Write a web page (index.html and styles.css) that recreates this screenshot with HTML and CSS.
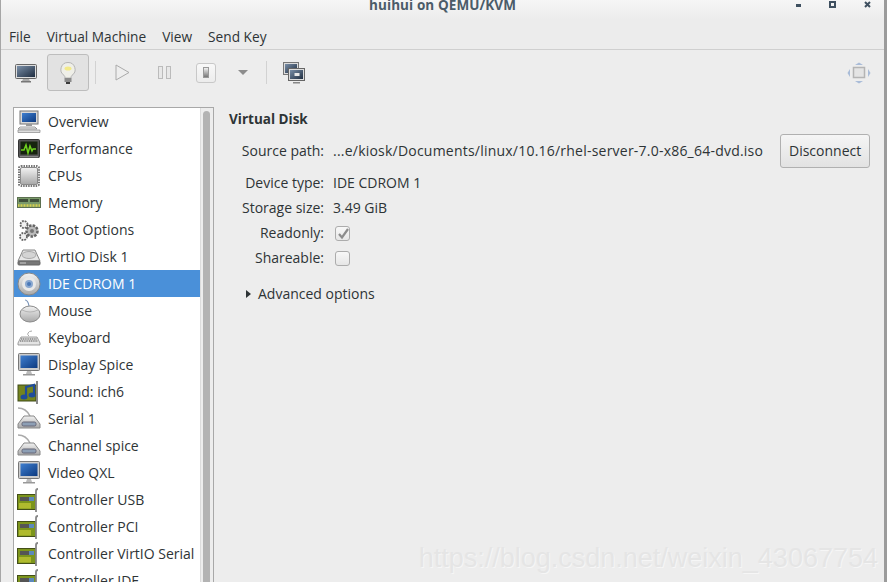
FILE: index.html
```html
<!doctype html>
<html>
  <head>
    <meta http-equiv="Content-Type" content="text/html; charset=utf-8">
    <title>huihui on QEMU/KVM</title>
    <link rel="stylesheet" href="styles.css">
  </head>
  <body>

    <svg class="defs" width="0" height="0">
      <defs>
        <linearGradient id="screen" x1="0" y1="0" x2="1" y2="1">
          <stop offset="0" stop-color="#7a8fa8"/><stop offset="1" stop-color="#1f2d40"/>
        </linearGradient>
        <linearGradient id="blue" x1="0" y1="0" x2="1" y2="1">
          <stop offset="0" stop-color="#3f7fd0"/><stop offset="1" stop-color="#0d3a80"/>
        </linearGradient>
        <linearGradient id="metal" x1="0" y1="0" x2="0" y2="1">
          <stop offset="0" stop-color="#f2f2f2"/><stop offset="1" stop-color="#a8a8a8"/>
        </linearGradient>
        <symbol id="i-overview" viewBox="0 0 24 24">
          <rect x="3" y="1" width="18" height="13" fill="#d8d8d8" stroke="#777"/>
          <rect x="5" y="3" width="14" height="9" fill="url(#blue)"/>
          <rect x="9" y="14" width="6" height="2" fill="#999"/>
          <path d="M3 17h15l2 2H1z" fill="#eee" stroke="#777" stroke-width=".7"/>
          <path d="M1 20h22v2.500H1z" fill="#ddd" stroke="#888" stroke-width=".7"/>
        </symbol>
        <symbol id="i-perf" viewBox="0 0 24 24">
          <rect x="1.500" y="2.500" width="21" height="18" rx="1" fill="#555" stroke="#333"/>
          <rect x="3.500" y="4.500" width="17" height="13" fill="#16240f"/>
          <path d="M4 13h3l2-5 2 8 2-7 2 5 1-2h3" fill="none" stroke="#6fd21e" stroke-width="1.500"/>
          <rect x="3" y="19" width="18" height="1.500" fill="#888"/>
        </symbol>
        <symbol id="i-cpu" viewBox="0 0 24 24">
          <rect x="2" y="2" width="20" height="20" rx="2" fill="none" stroke="#777" stroke-width="2" stroke-dasharray="1.500 1"/>
          <rect x="3.500" y="3.500" width="17" height="17" rx="1.500" fill="url(#metal)" stroke="#8a8a8a"/>
        </symbol>
        <symbol id="i-mem" viewBox="0 0 24 24">
          <rect x="0.500" y="6.500" width="23" height="10" fill="#7a9a6a" stroke="#5c7050"/>
          <rect x="2" y="8" width="9" height="3" fill="#3f4f3a"/>
          <rect x="13" y="8" width="9" height="3" fill="#3f4f3a"/>
          <path d="M1 14.500h22" stroke="#d6cf50" stroke-width="2.500" stroke-dasharray="1 .5"/>
        </symbol>
        <symbol id="i-boot" viewBox="0 0 24 24">
          <circle cx="15" cy="13" r="5.500" fill="#bbb" stroke="#666" stroke-width="2.500" stroke-dasharray="2.500 1.200"/>
          <circle cx="15" cy="13" r="2" fill="#777"/>
          <circle cx="7" cy="6.500" r="3.500" fill="#f2f2f2" stroke="#666" stroke-width="1.800" stroke-dasharray="1.800 1"/>
          <circle cx="6.500" cy="18.500" r="3.500" fill="#f2f2f2" stroke="#666" stroke-width="1.800" stroke-dasharray="1.800 1"/>
        </symbol>
        <symbol id="i-disk" viewBox="0 0 24 24">
          <path d="M6 5h12l5 11H1z" fill="#e6e6e6" stroke="#888"/>
          <ellipse cx="12" cy="10" rx="7" ry="3.500" fill="#d4d4d4" stroke="#aaa"/>
          <rect x="1" y="16" width="22" height="4" rx="1" fill="#777" stroke="#666"/>
          <rect x="3" y="17.500" width="6" height="1" fill="#ccc"/>
        </symbol>
        <symbol id="i-cd" viewBox="0 0 24 24">
          <circle cx="12" cy="12" r="11" fill="url(#metal)" stroke="#888"/>
          <circle cx="12" cy="12" r="7" fill="#e8e8e8"/>
          <circle cx="12" cy="12" r="4" fill="#8aa8d0"/>
          <circle cx="12" cy="12" r="2" fill="#4a78b8"/>
        </symbol>
        <symbol id="i-mouse" viewBox="0 0 24 24">
          <path d="M8 1q3 0 4 6" fill="none" stroke="#7a94b8" stroke-width="1.200"/>
          <ellipse cx="13" cy="15" rx="10" ry="8" fill="url(#metal)" stroke="#8a8a8a"/>
          <path d="M5 11q8 4 16 0" fill="none" stroke="#aaa" stroke-width=".8"/>
        </symbol>
        <symbol id="i-kbd" viewBox="0 0 24 24">
          <path d="M12 10q-2-1-1-3t4-2" fill="none" stroke="#aaa"/>
          <path d="M4 11h16l3 6v2H1v-2z" fill="#e4e4e4" stroke="#888" stroke-width=".8"/>
          <path d="M4 13h16M3 15h18" stroke="#555" stroke-width="1.200" stroke-dasharray="1.200 .6"/>
        </symbol>
        <symbol id="i-display" viewBox="0 0 24 24">
          <rect x="1.500" y="0.500" width="21" height="17" rx="1" fill="#ccc" stroke="#777"/>
          <rect x="3.500" y="2.500" width="17" height="12.500" fill="url(#blue)"/>
          <path d="M10 18h4l1 3H9z" fill="#bbb"/>
          <rect x="6" y="21" width="12" height="1.500" fill="#999"/>
        </symbol>
        <symbol id="i-sound" viewBox="0 0 24 24">
          <rect x="1" y="5" width="18" height="16" fill="#75841f" stroke="#3f4a18"/>
          <path d="M20 1v23" stroke="#888" stroke-width="2"/>
          <path d="M9 17V7l8-2v10" fill="none" stroke="#1f4c9c" stroke-width="2.200"/>
          <ellipse cx="7" cy="17" rx="3.500" ry="2.500" fill="#1f4c9c"/>
          <ellipse cx="15" cy="15" rx="3.500" ry="2.500" fill="#1f4c9c"/>
        </symbol>
        <symbol id="i-serial" viewBox="0 0 24 24">
          <path d="M1 1q8 0 12 8" fill="none" stroke="#aaa" stroke-width="1.500"/>
          <path d="M7 9h10l6 8v4H1v-4z" fill="url(#metal)" stroke="#888"/>
          <rect x="5" y="15" width="14" height="4" rx="1.500" fill="#8d9fb5" stroke="#667"/>
        </symbol>
        <symbol id="i-ctrl" viewBox="0 0 24 24">
          <rect x="0.500" y="6.500" width="18" height="15" fill="#7c951c" stroke="#444f18"/>
          <rect x="3" y="9" width="9" height="4" fill="#555"/>
          <rect x="12" y="9" width="5" height="4" fill="#5c88bb"/>
          <path d="M3 15v5.500M5 15v5.500M7 15v5.500M9 15v5.500M11 15v5.500M13 15v5.500" stroke="#e4e040"/>
          <path d="M21 1q-2 0-2 2v21" fill="none" stroke="#888" stroke-width="1.800"/>
        </symbol>
      </defs>
    </svg>

    <div class="window">
      <div class="titlebar">
        <span class="title">huihui on QEMU/KVM</span>
        <div class="controls">
          <span class="ctl-min"></span>
          <span class="ctl-max"></span>
          <svg class="ctl-close" width="7" height="7" viewBox="0 0 7 7"><path d="M1 1l5 5M6 1l-5 5" stroke="#3f5060" stroke-width="2"/></svg>
        </div>
      </div>

      <div class="menubar">
        <span>File</span>
        <span>Virtual Machine</span>
        <span>View</span>
        <span>Send Key</span>
      </div>

      <div class="toolbar">
        <div class="tool tool-first">
          <svg width="24" height="24" viewBox="0 0 24 24">
            <rect x="1.500" y="3.500" width="21" height="14" rx="1" fill="#ddd" stroke="#666"/>
            <rect x="3" y="5" width="18" height="11" fill="url(#screen)"/>
            <path d="M9 18h6l1 2H8z" fill="#aaa"/>
            <rect x="7" y="20" width="10" height="1.500" fill="#777"/>
          </svg>
        </div>
        <div class="tool tool-on">
          <svg width="16" height="22" viewBox="0 0 16 22">
            <path d="M8 .5a7 7 0 0 0-4 12.800q1 1 1 2.700h6q0-1.700 1-2.700a7 7 0 0 0-4-12.800z" fill="#efefe8" stroke="#b4b4b4"/>
            <ellipse cx="8" cy="6.500" rx="3.500" ry="2" fill="#f3ea88"/>
            <rect x="4.500" y="16" width="7" height="4" fill="#8a8a8a"/>
            <rect x="6" y="20" width="4" height="2" fill="#3a3a3a"/>
          </svg>
        </div>
        <span class="sep sep-a"></span>
        <div class="tool tool-play">
          <svg width="15" height="17" viewBox="0 0 15 17"><path d="M1 1l13 7.500L1 16z" fill="#eee" stroke="#aaa"/></svg>
        </div>
        <div class="tool tool-pause">
          <svg width="13" height="13" viewBox="0 0 13 13"><rect x=".5" y=".5" width="4" height="12" fill="#e8e8e8" stroke="#bbb"/><rect x="8.500" y=".5" width="4" height="12" fill="#e8e8e8" stroke="#bbb"/></svg>
        </div>
        <div class="tool tool-power">
          <span class="power"><span></span></span>
        </div>
        <span class="caret"></span>
        <span class="sep sep-b"></span>
        <div class="tool tool-screens">
          <svg width="22" height="22" viewBox="0 0 22 22">
            <rect x=".5" y=".5" width="15" height="12" fill="#ddd" stroke="#777"/>
            <rect x="2" y="2" width="12" height="9" fill="url(#screen)"/>
            <rect x="5.500" y="6.500" width="16" height="12" fill="#ddd" stroke="#666"/>
            <rect x="7" y="8" width="13" height="9" fill="url(#screen)"/>
            <path d="M11.500 11h5v3h-5z" fill="#e8e8e8"/>
            <rect x="10" y="20" width="7" height="1.500" fill="#888"/>
          </svg>
        </div>
        <svg class="fullscreen" width="24" height="22" viewBox="0 0 24 22">
          <rect x="6.500" y="5.500" width="11" height="10" fill="#e4e4e4" stroke="#b4b4b4" stroke-width="1.500"/>
          <path d="M12 .5l4 2.500H8zM12 21.500l4-2.500H8zM.5 11L3 7v8zM23.500 11L21 7v8z" fill="#a9bcd8"/>
        </svg>
      </div>

      <div class="main">
        <div class="list">
          <div class="rows">
            <div class="row"><svg><use href="#i-overview"/></svg>Overview</div>
            <div class="row"><svg><use href="#i-perf"/></svg>Performance</div>
            <div class="row"><svg><use href="#i-cpu"/></svg>CPUs</div>
            <div class="row"><svg><use href="#i-mem"/></svg>Memory</div>
            <div class="row"><svg><use href="#i-boot"/></svg>Boot Options</div>
            <div class="row"><svg><use href="#i-disk"/></svg>VirtIO Disk 1</div>
            <div class="row selected"><svg><use href="#i-cd"/></svg>IDE CDROM 1</div>
            <div class="row"><svg><use href="#i-mouse"/></svg>Mouse</div>
            <div class="row"><svg><use href="#i-kbd"/></svg>Keyboard</div>
            <div class="row"><svg><use href="#i-display"/></svg>Display Spice</div>
            <div class="row"><svg><use href="#i-sound"/></svg>Sound: ich6</div>
            <div class="row"><svg><use href="#i-serial"/></svg>Serial 1</div>
            <div class="row"><svg><use href="#i-serial"/></svg>Channel spice</div>
            <div class="row"><svg><use href="#i-display"/></svg>Video QXL</div>
            <div class="row"><svg><use href="#i-ctrl"/></svg>Controller USB</div>
            <div class="row"><svg><use href="#i-ctrl"/></svg>Controller PCI</div>
            <div class="row"><svg><use href="#i-ctrl"/></svg>Controller VirtIO Serial</div>
            <div class="row"><svg><use href="#i-ctrl"/></svg>Controller IDE</div>
          </div>
          <div class="list-scroll"><span></span></div>
        </div>

        <div class="detail">
          <h2>Virtual Disk</h2>
          <div class="fields">
            <div class="field field-source">
              <label>Source path:</label>
              <span class="path">...e/kiosk/Documents/linux/10.16/rhel-server-7.0-x86_64-dvd.iso</span>
              <button>Disconnect</button>
            </div>
            <div class="field"><label>Device type:</label><span>IDE CDROM 1</span></div>
            <div class="field"><label>Storage size:</label><span>3.49 GiB</span></div>
            <div class="field">
              <label>Readonly:</label>
              <span class="check"><svg width="12" height="12" viewBox="0 0 12 12"><path d="M2 6l3 3.500L11 1" fill="none" stroke="#8c8c8c" stroke-width="2.200"/></svg></span>
            </div>
            <div class="field"><label>Shareable:</label><span class="check"></span></div>
          </div>
          <div class="advanced"><span class="arrow"></span>Advanced options</div>
        </div>
      </div>

      <div class="watermark">https://blog.csdn.net/weixin_43067754</div>
    </div>

  </body>
</html>
```

FILE: styles.css
```css
html, body {
  height: 100%;
}
body {
  background: #fff;
  color: #2e3436;
  font: 14px/1.2 "Open Sans", "Noto Sans", sans-serif;
  margin: 0;
  overflow: hidden;
  padding: 0;
}

.defs {
  display: block;
  height: 0;
}

.window {
  background: #ededed;
  border-left: 1px solid #a6a6a6;
  border-right: 3px solid #9b9b9b;
  box-sizing: border-box;
  height: 582px;
  overflow: hidden;
  position: relative;
  width: 887px;
}

/* title bar, cut off at the top of the shot */
.titlebar {
  align-items: flex-start;
  background: linear-gradient(#f6f6f6, #ececec);
  display: flex;
  height: 20px;
  justify-content: center;
  overflow: hidden;
}
.title {
  color: #4b5c69;
  font-size: 13.5px;
  font-weight: 700;
  letter-spacing: .1px;
  line-height: 10px;
}
.controls {
  align-items: flex-start;
  display: flex;
  gap: 28px;
  position: absolute;
  right: 13px;
  top: 1px;
}
.ctl-min {
  background: #3f5060;
  height: 3px;
  margin-top: 3px;
  width: 5px;
}
.ctl-max {
  border: 2px solid #3f5060;
  height: 3px;
  width: 3px;
}

.menubar {
  background: #ececec;
  border-bottom: 1px solid #cfcfcf;
  display: flex;
  font-size: 13.7px;
  gap: 16px;
  height: 29px;
  line-height: 33px;
  padding-left: 8px;
}

.toolbar {
  align-items: center;
  display: flex;
  height: 45px;
  padding-left: 13px;
  position: relative;
}
.tool {
  align-items: center;
  display: flex;
  justify-content: center;
}
.tool-first {
  width: 24px;
}
.tool-on {
  background: #e2e2e2;
  border: 1px solid #bdbdbd;
  border-radius: 3px;
  box-sizing: border-box;
  height: 37px;
  margin-left: 9px;
  width: 42px;
}
.sep {
  background: #d2d2d2;
  height: 23px;
  width: 1px;
}
.sep-a {
  margin-left: 6px;
}
.sep-b {
  margin-left: 18px;
}
.tool-play {
  margin-left: 19px;
}
.tool-pause {
  margin-left: 28px;
}
.tool-power {
  margin-left: 25px;
}
.power {
  align-items: center;
  background: linear-gradient(#f8f8f8, #ececec);
  border: 1px solid #c8c8c8;
  border-radius: 3px;
  display: flex;
  height: 18px;
  justify-content: center;
  width: 18px;
}
.power span {
  background: linear-gradient(#f0f0f0, #777);
  border: 1px solid #999;
  height: 9px;
  width: 4px;
}
.caret {
  border-left: 5px solid transparent;
  border-right: 5px solid transparent;
  border-top: 5px solid #8c8c8c;
  height: 0;
  margin-left: 22px;
  width: 0;
}
.tool-screens {
  margin-left: 16px;
}
.fullscreen {
  margin-left: auto;
  margin-right: 13px;
}

.main {
  display: flex;
  padding: 12px 0 0 12px;
}

.list {
  background: #fff;
  border: 1px solid #a8a8a8;
  border-bottom: none;
  display: flex;
  flex: none;
  height: 480px;
  width: 199px;
}
.rows {
  flex: none;
  width: 186px;
}
.row {
  align-items: center;
  box-sizing: border-box;
  color: #2e3436;
  display: flex;
  height: 27px;
  padding: 2px 0 0 3px;
  white-space: nowrap;
}
.row svg {
  flex: none;
  height: 24px;
  margin: -2px 7px 0 0;
  width: 24px;
}
.selected {
  background: #4a90d9;
  color: #fff;
}
.list-scroll {
  background: #ededed;
  border-left: 1px solid #dcdcdc;
  box-sizing: border-box;
  flex: 1;
  padding: 3px 3px 0 2px;
}
.list-scroll span {
  background: #b3b3b3;
  border-radius: 4px 4px 0 0;
  display: block;
  height: 100%;
}

.detail {
  flex: 1;
  padding: 3px 15px 0 15px;
}
h2 {
  font-size: 13.5px;
  font-weight: 700;
  line-height: 18px;
  margin: 0 0 6px;
}
.fields {
  display: flex;
  flex-direction: column;
}
.field {
  align-items: center;
  display: flex;
  gap: 9px;
  height: 25px;
}
.field label {
  flex: none;
  text-align: right;
  width: 95px;
}
.field-source {
  height: 34px;
  margin-bottom: 3px;
}
.path {
  flex: 1;
  letter-spacing: .22px;
  white-space: nowrap;
}
button {
  background: linear-gradient(#f5f5f5, #e2e2e2);
  border: 1px solid #b0b0b0;
  border-radius: 3px;
  color: #2e3436;
  font: inherit;
  height: 34px;
  margin-left: 8px;
  padding: 0;
  width: 90px;
}
.check {
  align-items: center;
  background: linear-gradient(#f8f8f8, #e6e6e6);
  border: 1px solid #acacac;
  border-radius: 3px;
  box-sizing: border-box;
  display: flex;
  height: 15px;
  justify-content: center;
  margin-left: 2px;
  width: 15px;
}
.advanced {
  align-items: center;
  display: flex;
  margin: 15px 0 0 17px;
}
.arrow {
  border-bottom: 4px solid transparent;
  border-left: 5px solid #2e3436;
  border-top: 4px solid transparent;
  height: 0;
  margin-right: 7px;
  width: 0;
}

.watermark {
  bottom: 8px;
  color: #e5e5e5;
  font: 27px "Liberation Sans", sans-serif;
  position: absolute;
  right: 6px;
  text-shadow: 1px 1px 0 #f6f6f6;
}
```
